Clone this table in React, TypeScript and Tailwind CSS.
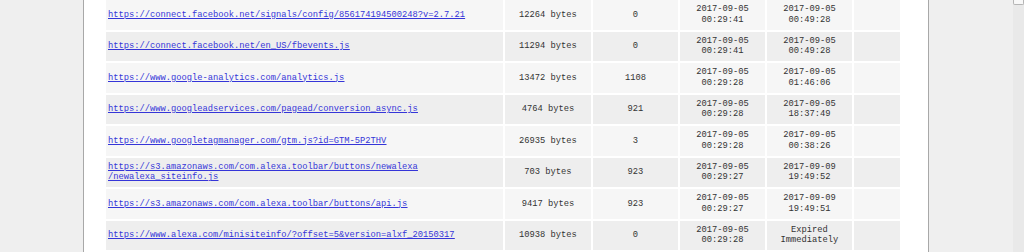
const rows = [
  { url: ["https://connect.facebook.net/signals/config/856174194500248?v=2.7.21"], size: "12264 bytes", hits: "0", first: ["2017-09-05", "00:29:41"], expires: ["2017-09-05", "00:49:28"] },
  { url: ["https://connect.facebook.net/en_US/fbevents.js"], size: "11294 bytes", hits: "0", first: ["2017-09-05", "00:29:41"], expires: ["2017-09-05", "00:49:28"] },
  { url: ["https://www.google-analytics.com/analytics.js"], size: "13472 bytes", hits: "1108", first: ["2017-09-05", "00:29:28"], expires: ["2017-09-05", "01:46:06"] },
  { url: ["https://www.googleadservices.com/pagead/conversion_async.js"], size: "4764 bytes", hits: "921", first: ["2017-09-05", "00:29:28"], expires: ["2017-09-05", "18:37:49"] },
  { url: ["https://www.googletagmanager.com/gtm.js?id=GTM-5P2THV"], size: "26935 bytes", hits: "3", first: ["2017-09-05", "00:29:28"], expires: ["2017-09-05", "00:38:26"] },
  { url: ["https://s3.amazonaws.com/com.alexa.toolbar/buttons/newalexa", "/newalexa_siteinfo.js"], size: "703 bytes", hits: "923", first: ["2017-09-05", "00:29:27"], expires: ["2017-09-09", "19:49:52"] },
  { url: ["https://s3.amazonaws.com/com.alexa.toolbar/buttons/api.js"], size: "9417 bytes", hits: "923", first: ["2017-09-05", "00:29:27"], expires: ["2017-09-09", "19:49:51"] },
  { url: ["https://www.alexa.com/minisiteinfo/?offset=5&version=alxf_20150317"], size: "10938 bytes", hits: "0", first: ["2017-09-05", "00:29:28"], expires: ["Expired", "Immediately"] },
];

export default function App() {
  return (
    <div className="flex h-[252px] w-[1024px] overflow-hidden bg-[#efefef] font-['Liberation_Mono','Courier_New',monospace] text-[8.75px] leading-[10.5px] text-[#333]">
      <div className="w-[83px] shrink-0" />

      {/* content panel */}
      <div className="w-[846px] shrink-0 border-x border-[#a8a8a8] bg-white pl-[20px]">
        <table className="-mt-[2px] border-separate border-spacing-[2px]">
          <tbody>
            {rows.map((r, i) => (
              <tr key={i} className={i % 2 === 0 ? "bg-[#f6f6f6]" : "bg-[#eeeeee]"}>
                <td className="h-[29.5px] w-[397px] pl-[2px] text-left align-middle">
                  <a href="#" className="text-[#3535d8] underline">
                    {r.url.map((line, k) => (
                      <span key={k} className="block w-fit underline">{line}</span>
                    ))}
                  </a>
                </td>
                <td className="w-[86px] text-center">{r.size}</td>
                <td className="w-[85px] text-center">{r.hits}</td>
                <td className="w-[85px] text-center">
                  {r.first[0]}<br />{r.first[1]}
                </td>
                <td className="w-[85px] text-center">
                  {r.expires[0]}<br />{r.expires[1]}
                </td>
                <td className="w-[46px]" />
              </tr>
            ))}
          </tbody>
        </table>
      </div>

      <div className="flex-1" />

      {/* scrollbar */}
      <div className="relative w-[11px] shrink-0 bg-[#e9e9e9]">
        <div className="absolute left-0 right-0 top-0 h-[5px] rounded-b-[2px] border border-t-0 border-[#b5b5b5] bg-[#f8f8f8]" />
      </div>
    </div>
  );
}
